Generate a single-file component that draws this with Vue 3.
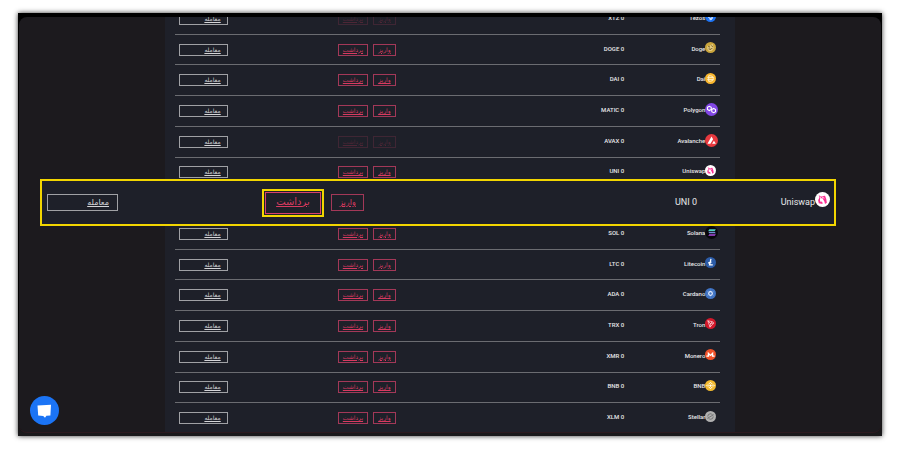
<script setup>
const coins = [
  { id: 'tezos', name: 'Tezos', symbol: 'XTZ', disabled: true },
  { id: 'doge', name: 'Doge', symbol: 'DOGE' },
  { id: 'dai', name: 'Dai', symbol: 'DAI' },
  { id: 'polygon', name: 'Polygon', symbol: 'MATIC', large: true },
  { id: 'avalanche', name: 'Avalanche', symbol: 'AVAX', large: true, disabled: true },
  { id: 'uniswap', name: 'Uniswap', symbol: 'UNI' },
  { id: 'solana', name: 'Solana', symbol: 'SOL', large: true },
  { id: 'litecoin', name: 'Litecoin', symbol: 'LTC' },
  { id: 'cardano', name: 'Cardano', symbol: 'ADA' },
  { id: 'tron', name: 'Tron', symbol: 'TRX' },
  { id: 'monero', name: 'Monero', symbol: 'XMR' },
  { id: 'bnb', name: 'BNB', symbol: 'BNB' },
  { id: 'stellar', name: 'Stellar', symbol: 'XLM' }
]

// the row under the enlarged strip stays empty
const rows = [...coins.slice(0, 6), null, ...coins.slice(6)]
</script>

<template>
  <svg class="sprite" aria-hidden="true">
    <symbol id="tezos" viewBox="0 0 24 24">
      <circle cx="12" cy="12" r="12" fill="#1c72f2" />
      <path d="M8 4v9q0 3 3 3h4M5 8h11l-4 4q5 0 4 4t-6 3" fill="none" stroke="#fff" stroke-width="2" />
    </symbol>
    <symbol id="doge" viewBox="0 0 24 24">
      <circle cx="12" cy="12" r="12" fill="#c9a43c" />
      <path d="M5 8l3 1 4-2 5-3 1 5 1 5-4 5-6 1-4-5z" fill="#e6cd82" />
      <path d="M7 10l4 1M14 8l3 2M8 15l5 1 3-3" fill="none" stroke="#5e4a20" stroke-width="2" />
    </symbol>
    <symbol id="dai" viewBox="0 0 24 24">
      <circle cx="12" cy="12" r="12" fill="#f8b62f" />
      <path d="M8 6h4q6 0 6 6t-6 6H8zM5 10h14M5 14h14" fill="none" stroke="#fff1cf" stroke-width="2" />
    </symbol>
    <symbol id="polygon" viewBox="0 0 24 24">
      <circle cx="12" cy="12" r="12" fill="#8247e5" />
      <path d="M4.500 8l3.500-2 3.500 2v4L8 14l-3.500-2zM12.500 12l3.500-2 3.500 2v4L16 18l-3.500-2zM11.500 11l2 1" fill="none" stroke="#fff" stroke-width="2" />
    </symbol>
    <symbol id="avalanche" viewBox="0 0 24 24">
      <circle cx="12" cy="12" r="12" fill="#e8393f" />
      <path d="M12 4.500l3 5-5 8.500H4.500zM16.500 12.500l3.500 5.500h-7z" fill="#fff" />
    </symbol>
    <symbol id="uniswap" viewBox="0 0 24 24">
      <circle cx="12" cy="12" r="12" fill="#fff" />
      <path d="M6 5l4 2 6-1 2 5 1 6-3 2-1-4-3-5-4 0 0 4 4 2 0 3-6-1-1-5 2-4z" fill="#fb2f92" />
      <path d="M11 8l4 2M8 15l3-1 3 4M8 7l1 3" fill="none" stroke="#fff" stroke-width="1.200" />
    </symbol>
    <symbol id="solana" viewBox="0 0 24 24">
      <circle cx="12" cy="12" r="12" fill="#08080c" />
      <path d="M8 6h12l-2 3H6z" fill="#4fd2c0" />
      <path d="M6 10.500h12l2 3H8z" fill="#718fd6" />
      <path d="M8 15h12l-2 3H6z" fill="#ab4de0" />
    </symbol>
    <symbol id="litecoin" viewBox="0 0 24 24">
      <circle cx="12" cy="12" r="12" fill="#2c5ca8" />
      <path d="M13 4l-3 13h7M7 13.500l7-3" fill="none" stroke="#fff" stroke-width="2.800" />
    </symbol>
    <symbol id="cardano" viewBox="0 0 24 24">
      <circle cx="12" cy="12" r="12" fill="#3f73c4" />
      <circle cx="12" cy="12" r="4" fill="none" stroke="#e9f1ff" stroke-width="2.500" />
      <path d="M12 4v1M12 19v1M5 8l1 .5M18 15.500l1 .5M5 16l1-.5M18 8.500l1-.5" stroke="#b8cff2" stroke-width="1.500" />
    </symbol>
    <symbol id="tron" viewBox="0 0 24 24">
      <circle cx="12" cy="12" r="12" fill="#d3182b" />
      <path d="M6 6l10 2 3 3-8 9zM6 6l6 6-1 8M12 12l4-4M12 12l7-1" fill="none" stroke="#ffdfe2" stroke-width="1.500" />
    </symbol>
    <symbol id="monero" viewBox="0 0 24 24">
      <circle cx="12" cy="12" r="12" fill="#f0522a" />
      <path d="M3 17V14h3V6l6 6 6-6v8h3v3h-6v-4l-3 3-3-3v4z" fill="#fff" />
    </symbol>
    <symbol id="bnb" viewBox="0 0 24 24">
      <circle cx="12" cy="12" r="12" fill="#f3ba2f" />
      <path d="M7.500 9.500L12 5l4.500 4.500M7.500 14.500L12 19l4.500-4.500M4 12l1.500-1.500L7 12l-1.500 1.500zM17 12l1.500-1.500L20 12l-1.500 1.500z" fill="none" stroke="#fff" stroke-width="2" />
      <path d="M12 9l3 3-3 3-3-3z" fill="#fff" />
    </symbol>
    <symbol id="stellar" viewBox="0 0 24 24">
      <circle cx="12" cy="12" r="12" fill="#b0b0b0" />
      <path d="M5 16L19 8M6 12q0-6 6-6 3 0 4 2M18 12q0 6-6 6-3 0-4-2" fill="none" stroke="#67686a" stroke-width="1.800" />
    </symbol>
  </svg>

  <main class="stage">
    <div class="window">
      <div class="screen">
        <section class="panel">
          <table class="wallet" dir="rtl">
            <tbody>
              <tr v-for="(coin, i) in rows" :key="i" class="row">
                <template v-if="coin">
                  <td class="coin" dir="ltr">
                    <span>{{ coin.name }}</span>
                    <span class="slot" :class="{ large: coin.large }">
                      <svg class="icon"><use :href="'#' + coin.id" /></svg>
                    </span>
                  </td>
                  <td class="balance"><bdi>{{ coin.symbol }} 0</bdi></td>
                  <td class="actions" :class="{ disabled: coin.disabled }">
                    <a href="#" class="btn pink deposit">واریز</a>
                    <a href="#" class="btn pink withdraw">برداشت</a>
                  </td>
                  <td class="trade"><a href="#" class="btn">معامله</a></td>
                </template>
              </tr>
            </tbody>
          </table>
        </section>
      </div>

      <section class="focus" dir="rtl">
        <div class="coin" dir="ltr">
          <span>Uniswap</span>
          <span class="slot"><svg class="icon"><use href="#uniswap" /></svg></span>
        </div>
        <div class="balance"><bdi>UNI 0</bdi></div>
        <div class="actions">
          <a href="#" class="btn pink deposit">واریز</a>
          <span class="ring"><a href="#" class="btn pink withdraw">برداشت</a></span>
        </div>
        <div class="trade"><a href="#" class="btn">معامله</a></div>
      </section>

      <button class="chat" type="button" aria-label="گفتگو">
        <svg viewBox="0 0 29 29">
          <path d="M7.500 9.500l13.500-.8-.6 10.800-4 .2-1.400 2-1.800-1.800-5-.4z" fill="#fff" />
        </svg>
      </button>
    </div>
  </main>
</template>

<style>
body {
  margin: 0;
  background: #fff;
}
</style>

<style scoped>
.sprite {
  position: absolute;
  width: 0;
  height: 0;
}

.stage {
  box-sizing: border-box;
  height: 100vh;
  padding: 13px 18px 14px;
  font-family: Roboto, "DejaVu Sans", sans-serif;
  font-size: 6px;
  font-weight: 500;
  line-height: 8px;
  color: #e8e8ea;
}

.window {
  position: relative;
  box-sizing: border-box;
  height: 100%;
  padding: 4px 1px 3px;
  background: linear-gradient(#000 70%, #1a191b);
  box-shadow: 0 0 5px rgba(0, 0, 0, 0.8);
}

.screen {
  box-sizing: border-box;
  height: 100%;
  overflow: hidden;
  display: flex;
  justify-content: center;
  border-bottom: 1px solid #2c1a1f;
  border-radius: 8px;
  background: #1c1a1e;
}

.panel {
  box-sizing: border-box;
  width: 66.2%;
  height: 100%;
  padding: 0 15px 0 10px;
  background: #1e2029;
}

.wallet {
  display: block;
  height: calc(100% + 15px);
  margin-top: -13px;
}

.wallet tbody {
  display: grid;
  grid-auto-rows: 1fr;
  height: 100%;
}

.row,
.focus {
  display: grid;
  align-items: center;
}

.row {
  grid-template-columns: 96fr 228fr 168fr 53fr;
  border-bottom: 1px solid #6b6c71;
}

.row:last-child {
  border-bottom-color: transparent;
}

td {
  padding: 0;
}

.coin {
  display: flex;
  align-items: center;
  justify-content: flex-end;
  padding-bottom: 2px;
}

.slot {
  display: flex;
  width: 15px;
  padding-bottom: 2px;
}

.slot.large {
  padding-bottom: 0;
}

.icon {
  width: 11px;
  height: 11px;
}

.large .icon {
  width: 13px;
  height: 13px;
}

.balance {
  padding-bottom: 2px;
  text-align: right;
}

.actions {
  display: flex;
  align-items: center;
  gap: 5px;
}

.actions.disabled {
  opacity: 0.25;
}

.btn {
  display: block;
  box-sizing: border-box;
  height: 12px;
  padding: 0 6px;
  border: 1px solid #a0a1a5;
  font-family: "DejaVu Sans", sans-serif;
  font-weight: 400;
  line-height: 10px;
  color: #d5d5d8;
}

.pink {
  padding: 0;
  border-color: #a33858;
  text-align: center;
  color: #d83a60;
}

.deposit {
  width: 23px;
}

.withdraw {
  width: 30px;
}

.trade {
  padding-left: 4px;
}

.focus {
  position: absolute;
  top: 166px;
  left: 22px;
  right: 46px;
  box-sizing: border-box;
  height: 47px;
  grid-template-columns: 137fr 333fr 246fr 76fr;
  border: 2px solid #f2d500;
  background: #1e2029;
  font-size: 9px;
  font-weight: 400;
  line-height: 12px;
}

.focus .slot {
  width: 19px;
  padding-bottom: 4px;
}

.focus .icon {
  width: 15px;
  height: 15px;
}

.focus .actions {
  gap: 7px;
}

.focus .btn {
  height: 17px;
  padding: 0 8px;
  font-size: 8px;
  line-height: 15px;
}

.focus .pink {
  padding: 0;
}

.focus .deposit {
  width: 33px;
}

.ring {
  padding: 1px;
  border: 2px solid #f2d500;
}

.focus .withdraw {
  width: 56px;
  height: 22px;
  border-color: #d8406c;
  font-size: 10px;
  line-height: 18px;
}

.focus .trade {
  padding-left: 5px;
}

.chat {
  position: absolute;
  bottom: 11px;
  left: 12px;
  width: 29px;
  height: 29px;
  padding: 0;
  border: 0;
  border-radius: 50%;
  background: #1b74f5;
}

.chat svg {
  display: block;
  width: 29px;
  height: 29px;
}
</style>
